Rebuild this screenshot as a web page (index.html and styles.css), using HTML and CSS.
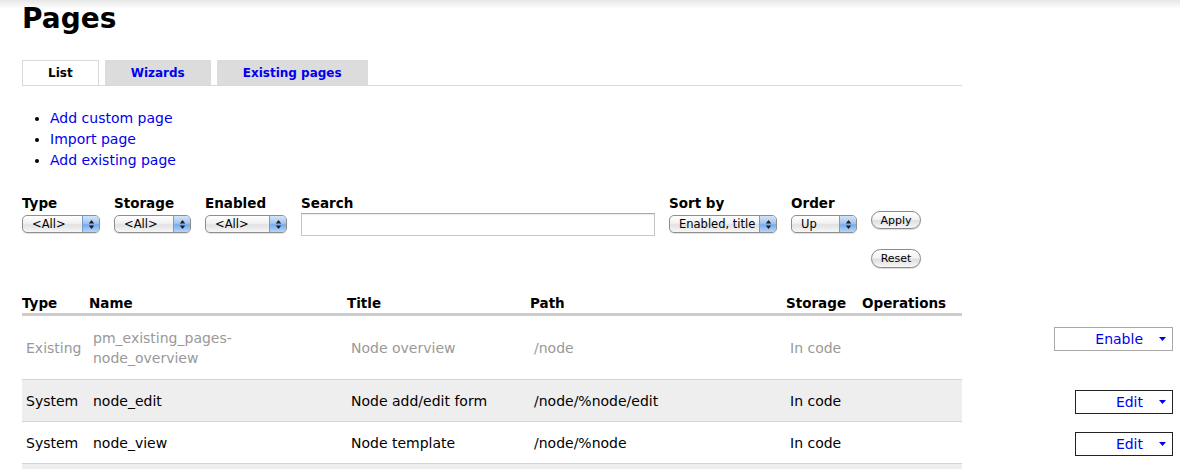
FILE: index.html
```html
<!DOCTYPE html>
<html lang="en">
<head>
<meta charset="utf-8">
<title>Pages</title>
<link rel="stylesheet" href="styles.css">
</head>
<body>
<div class="page">
  <h1 class="title">Pages</h1>

  <ul class="tabs">
    <li class="tab active"><a href="#">List</a></li>
    <li class="tab"><a href="#">Wizards</a></li>
    <li class="tab"><a href="#">Existing pages</a></li>
  </ul>

  <ul class="actions">
    <li><a href="#">Add custom page</a></li>
    <li><a href="#">Import page</a></li>
    <li><a href="#">Add existing page</a></li>
  </ul>

  <form class="filters" onsubmit="return false">
    <div class="field">
      <label class="field-label" for="f-type">Type</label>
      <span class="popup w-type">
        <select id="f-type"><option>&lt;All&gt;</option><option>System</option><option>Custom</option><option>Existing</option></select>
        <span class="popup-cap"><svg width="7" height="11" viewBox="0 0 7 11"><path d="M3.5 1L6.2 4.6H0.8z M0.8 6.4H6.2L3.5 10z"/></svg></span>
      </span>
    </div>
    <div class="field">
      <label class="field-label" for="f-storage">Storage</label>
      <span class="popup w-storage">
        <select id="f-storage"><option>&lt;All&gt;</option><option>Normal</option><option>Default</option><option>Overridden</option></select>
        <span class="popup-cap"><svg width="7" height="11" viewBox="0 0 7 11"><path d="M3.5 1L6.2 4.6H0.8z M0.8 6.4H6.2L3.5 10z"/></svg></span>
      </span>
    </div>
    <div class="field">
      <label class="field-label" for="f-enabled">Enabled</label>
      <span class="popup w-enabled">
        <select id="f-enabled"><option>&lt;All&gt;</option><option>Enabled</option><option>Disabled</option></select>
        <span class="popup-cap"><svg width="7" height="11" viewBox="0 0 7 11"><path d="M3.5 1L6.2 4.6H0.8z M0.8 6.4H6.2L3.5 10z"/></svg></span>
      </span>
    </div>
    <div class="field">
      <label class="field-label" for="f-search">Search</label>
      <input class="search" id="f-search" type="text">
    </div>
    <div class="field">
      <label class="field-label" for="f-sort">Sort by</label>
      <span class="popup w-sort">
        <select id="f-sort"><option>Enabled, title</option><option>Title</option><option>Name</option><option>Path</option></select>
        <span class="popup-cap"><svg width="7" height="11" viewBox="0 0 7 11"><path d="M3.5 1L6.2 4.6H0.8z M0.8 6.4H6.2L3.5 10z"/></svg></span>
      </span>
    </div>
    <div class="field">
      <label class="field-label" for="f-order">Order</label>
      <span class="popup w-order">
        <select id="f-order"><option>Up</option><option>Down</option></select>
        <span class="popup-cap"><svg width="7" height="11" viewBox="0 0 7 11"><path d="M3.5 1L6.2 4.6H0.8z M0.8 6.4H6.2L3.5 10z"/></svg></span>
      </span>
    </div>
    <div class="field-buttons">
      <button class="pill" type="submit">Apply</button>
      <button class="pill pill-reset" type="reset">Reset</button>
    </div>
  </form>

  <table class="pages">
    <colgroup>
      <col class="c-type"><col class="c-name"><col class="c-title"><col class="c-path"><col class="c-storage"><col class="c-ops">
    </colgroup>
    <thead>
      <tr><th>Type</th><th>Name</th><th>Title</th><th>Path</th><th>Storage</th><th>Operations</th></tr>
    </thead>
    <tbody>
      <tr class="row-disabled">
        <td>Existing</td>
        <td>pm_existing_pages-node_overview</td>
        <td>Node overview</td>
        <td>/node</td>
        <td>In code</td>
        <td class="ops"><div class="ops-wrap"><a class="dropbutton" href="#"><span>Enable</span><svg class="drop-arrow" width="7" height="4" viewBox="0 0 7 4"><path d="M0 0h7L3.5 4z"/></svg></a></div></td>
      </tr>
      <tr class="row-even">
        <td>System</td>
        <td>node_edit</td>
        <td>Node add/edit form</td>
        <td>/node/%node/edit</td>
        <td>In code</td>
        <td class="ops"><div class="ops-wrap"><a class="dropbutton" href="#"><span>Edit</span><svg class="drop-arrow" width="7" height="4" viewBox="0 0 7 4"><path d="M0 0h7L3.5 4z"/></svg></a></div></td>
      </tr>
      <tr class="row-odd">
        <td>System</td>
        <td>node_view</td>
        <td>Node template</td>
        <td>/node/%node</td>
        <td>In code</td>
        <td class="ops"><div class="ops-wrap"><a class="dropbutton" href="#"><span>Edit</span><svg class="drop-arrow" width="7" height="4" viewBox="0 0 7 4"><path d="M0 0h7L3.5 4z"/></svg></a></div></td>
      </tr>
      <tr class="row-even">
        <td>System</td>
        <td>term_view</td>
        <td>Taxonomy term template</td>
        <td>/taxonomy/term/%taxonomy_term</td>
        <td>In code</td>
        <td class="ops"><div class="ops-wrap"><a class="dropbutton" href="#"><span>Edit</span><svg class="drop-arrow" width="7" height="4" viewBox="0 0 7 4"><path d="M0 0h7L3.5 4z"/></svg></a></div></td>
      </tr>
    </tbody>
  </table>
</div>
</body>
</html>
```

FILE: styles.css
```css
html {
  background: #fff;
}

body {
  margin: 0;
  background: linear-gradient(#e6e6e6, #fff 9px) no-repeat;
  font-family: "DejaVu Sans", Verdana, sans-serif;
  font-size: 14px;
  color: #000;
}

a {
  color: #0000ee;
  text-decoration: none;
}

.page {
  width: 940px;
  padding-left: 22px;
}

/* Heading */
.title {
  margin: 2px 0 0;
  font-size: 28px;
  line-height: 34px;
  font-weight: bold;
}

/* Primary tabs */
.tabs {
  display: flex;
  gap: 6px;
  margin: 24px 0 0;
  padding: 0;
  list-style: none;
  height: 25px;
  border-bottom: 1px solid #dadada;
}

.tab a {
  display: block;
  height: 25px;
  padding: 1px 26px 0;
  box-sizing: border-box;
  line-height: 24px;
  font-size: 12px;
  font-weight: bold;
  background: #dcdcdc;
  color: #0000ee;
}

.tab.active a {
  padding: 0 25px;
  background: #fff;
  color: #000;
  border: 1px solid #dadada;
  border-bottom: 0;
  line-height: 24px;
}

/* Action links */
.actions {
  margin: 22px 0 0;
  padding-left: 28px;
  line-height: 21px;
  font-size: 14px;
}

/* Exposed filters */
.filters {
  display: flex;
  align-items: flex-start;
  gap: 14px;
  margin-top: 23px;
}

.field {
  display: flex;
  flex-direction: column;
  align-items: flex-start;
}

.field-label {
  font-size: 13.5px;
  font-weight: bold;
  line-height: 18px;
  margin-bottom: 1px;
}

.popup {
  display: flex;
  margin-top: 2px;
  height: 18px;
  box-sizing: border-box;
  border: 1px solid #8e8e8e;
  border-radius: 5px;
  overflow: hidden;
  background: linear-gradient(#ffffff, #f1f1f1 45%, #e2e2e2 55%, #f6f6f6);
  box-shadow: 0 1px 1px rgba(0, 0, 0, 0.12);
}

.popup select {
  -webkit-appearance: none;
  appearance: none;
  flex: 1;
  min-width: 0;
  height: 16px;
  margin: 0;
  padding: 0 0 0 9px;
  border: 0;
  outline: none;
  background: transparent;
  font-family: "DejaVu Sans", Verdana, sans-serif;
  font-size: 11.5px;
  line-height: 16px;
  color: #000;
}

.popup-cap {
  flex: none;
  width: 16px;
  display: flex;
  align-items: center;
  justify-content: center;
  border-left: 1px solid #7b9cc8;
  background: linear-gradient(#d3e4f9, #a2c5f2 45%, #78aaea 55%, #b4d6fa);
}

.popup-cap svg {
  fill: #1c1c1c;
}

.w-type { width: 78px; }
.w-storage { width: 77px; }
.w-enabled { width: 82px; }
.w-sort { width: 108px; }
.w-order { width: 66px; }

.search {
  width: 354px;
  height: 23px;
  box-sizing: border-box;
  margin: 0;
  border: 1px solid #c6c6c6;
  border-top-color: #a8a8a8;
  box-shadow: inset 0 1px 1px rgba(0, 0, 0, 0.08);
  font-family: "DejaVu Sans", Verdana, sans-serif;
  font-size: 12px;
  padding: 0 4px;
}

.field-buttons {
  display: flex;
  flex-direction: column;
  align-items: flex-start;
  padding-top: 17px;
}

.pill {
  width: 50px;
  height: 18px;
  padding: 0;
  box-sizing: border-box;
  border: 1px solid #8a8a8a;
  border-radius: 10px;
  background: linear-gradient(#ffffff, #f3f3f3 45%, #dfdfdf 55%, #f7f7f7);
  box-shadow: 0 1px 1px rgba(0, 0, 0, 0.15);
  font-family: "DejaVu Sans", Verdana, sans-serif;
  font-size: 11px;
  line-height: 15px;
  color: #000;
}

.pill-reset {
  margin-top: 20px;
  height: 19px;
}

/* Listing table */
.pages {
  width: 940px;
  margin-top: 21px;
  table-layout: fixed;
  border-collapse: separate;
  border-spacing: 0;
}

.c-type { width: 67px; }
.c-name { width: 258px; }
.c-title { width: 183px; }
.c-path { width: 256px; }
.c-storage { width: 76px; }
.c-ops { width: 100px; }

.pages th {
  text-align: left;
  font-size: 13.5px;
  font-weight: bold;
  line-height: 20px;
  padding: 4px 0 0;
  border-bottom: 3px solid #cccccc;
  white-space: nowrap;
}

.pages td {
  padding: 11px 16px 10px 4px;
  line-height: 20px;
  border-bottom: 1px solid #d4d4d4;
  vertical-align: middle;
}

.pages .row-even td {
  background: #eeeeee;
}

.pages .row-disabled td {
  color: #999999;
  padding-top: 12px;
  padding-bottom: 11px;
}

.pages td.ops {
  vertical-align: top;
  padding-top: 10px;
  padding-bottom: 0;
}

.pages .row-disabled td.ops {
  padding-top: 11px;
  padding-bottom: 0;
}

.ops-wrap {
  width: 307px;
  display: flex;
  justify-content: flex-end;
}

.dropbutton {
  display: inline-flex;
  align-items: center;
  gap: 16px;
  height: 24px;
  box-sizing: border-box;
  padding: 0 6px 0 40px;
  border: 1px solid #222;
  font-size: 14px;
  line-height: 20px;
  color: #0000ee;
}

.row-disabled .dropbutton {
  border-color: #a8a8a8;
  background: #fff;
}

.drop-arrow {
  fill: #0000ee;
}
```
